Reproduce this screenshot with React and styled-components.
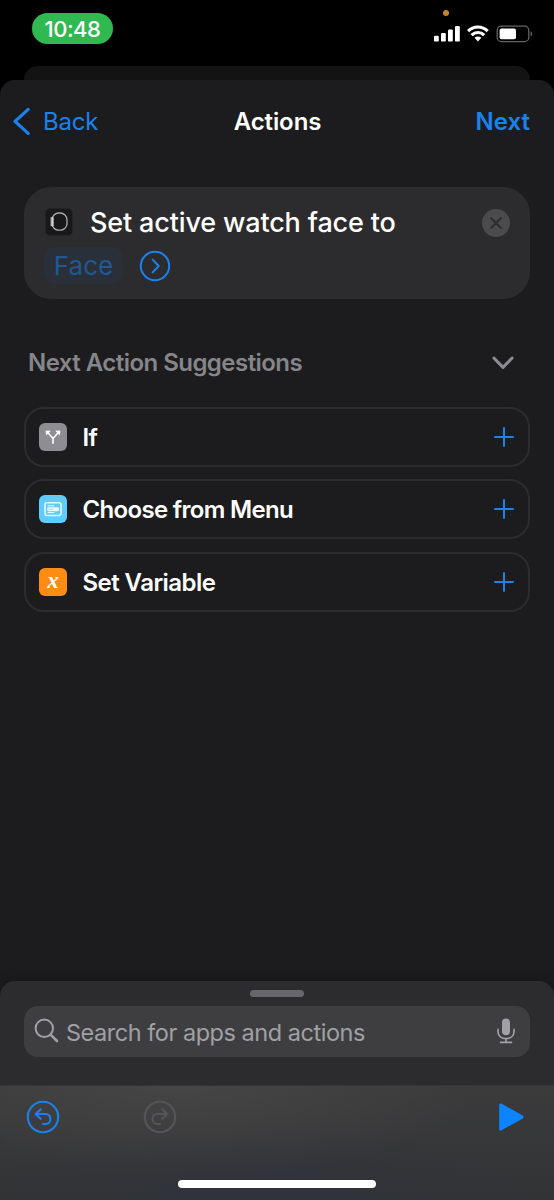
import React from 'react'
import styled, { createGlobalStyle } from 'styled-components'

const blue = '#1a82ee'

const suggestions = [
    { label: 'If', color: '#8e8d93', icon: 'branch', spacing: '-0.6px' },
    { label: 'Choose from Menu', color: '#5fcdfa', icon: 'menu', spacing: '-0.68px' },
    { label: 'Set Variable', color: '#fd8c13', icon: 'variable', spacing: '-0.55px' },
]

const RowGlyph = ({ icon }) => {
    if (icon === 'branch') {
        return (
            <svg width="28" height="28" viewBox="0 0 28 28" fill="none" stroke="#fff" strokeWidth="1.6" strokeLinecap="round">
                <path d="M14 20.3V15.6L9 9.8M14 15.6L19 9.8" />
                <path d="M6.6 7.4L11.8 7.8L7.2 12.4ZM21.4 7.4L16.2 7.8L20.8 12.4Z" fill="#fff" stroke="none" />
            </svg>
        )
    }
    if (icon === 'menu') {
        return (
            <svg width="28" height="28" viewBox="0 0 28 28" fill="none">
                <rect x="6" y="7.8" width="16" height="12.6" rx="1.8" stroke="#e9f9ff" strokeWidth="1.5" />
                <path d="M9 10.8h6M9 17.6h6" stroke="#e9f9ff" strokeWidth="1" strokeLinecap="round" />
                <rect x="8" y="12.2" width="12" height="4" rx="1.4" fill="#e9f9ff" />
                <path d="M9.6 14.2h4.6" stroke="#8bdcfb" strokeWidth="0.9" />
            </svg>
        )
    }
    return <Variable>x</Variable>
}

const App = () => {
    return (
        <Phone>
            <GlobalStyle />
            <StatusBar>
                <Clock>10:48</Clock>
                <StatusIcons>
                    <MicDot />
                    <svg width="99" height="18" viewBox="0 0 99 18" fill="none">
                        <g fill="#fff">
                            <rect x="0" y="10.8" width="4.8" height="5.8" rx="1.2" />
                            <rect x="7" y="8" width="4.8" height="8.6" rx="1.2" />
                            <rect x="14" y="4.4" width="4.8" height="12.2" rx="1.2" />
                            <rect x="21" y="1" width="4.8" height="15.6" rx="1.2" />
                        </g>
                        <g stroke="#fff" strokeWidth="3.1">
                            <path d="M34.1 6.1C39.6 0.6 48.2 0.6 53.7 6.1" />
                            <path d="M37.6 10.1C41.2 6.7 46.6 6.7 50.2 10.1" />
                        </g>
                        <path d="M40.5 12.8C42.4 11.2 45.4 11.2 47.3 12.8L43.9 16.4Z" fill="#fff" />
                        <rect x="63.2" y="1.2" width="31.6" height="15.4" rx="4.2" stroke="#646464" strokeWidth="1.3" />
                        <rect x="65.6" y="3.6" width="16.4" height="10.6" rx="2" fill="#fff" />
                        <path d="M96.6 6.2c2 .8 2 4.6 0 5.4z" fill="#646464" />
                    </svg>
                </StatusIcons>
            </StatusBar>
            <SheetBehind />
            <Sheet>
                <NavBar>
                    <BackButton>
                        <svg width="20" height="30" viewBox="0 0 20 30" fill="none" stroke={blue} strokeWidth="3.2" strokeLinecap="round" strokeLinejoin="round">
                            <path d="M16.2 2.4L3 14.4L16.2 26.4" />
                        </svg>
                        Back
                    </BackButton>
                    <NavTitle>Actions</NavTitle>
                    <NextButton>Next</NextButton>
                </NavBar>

                <ActionCard>
                    <ActionLine>
                        <WatchIcon>
                            <svg width="26" height="26" viewBox="0 0 26 26" fill="none">
                                <path d="M5.5 8.2v9" stroke="#b9b9b9" strokeWidth="1.8" />
                                <rect x="6" y="4" width="15" height="17.2" rx="6.8" stroke="#a8a8a8" strokeWidth="1.3" />
                                <path d="M6.9 8.2v9" stroke="#e4e4e4" strokeWidth="1.4" />
                            </svg>
                        </WatchIcon>
                        <ActionText>Set active watch face to</ActionText>
                        <ClearButton>
                            <svg width="28" height="28" viewBox="0 0 28 28" stroke="#2e2e30" strokeWidth="2.2" strokeLinecap="round">
                                <path d="M9.2 9.2L18.8 18.8M18.8 9.2L9.2 18.8" />
                            </svg>
                        </ClearButton>
                    </ActionLine>
                    <ActionLine>
                        <FaceToken>Face</FaceToken>
                        <svg width="32" height="32" viewBox="0 0 32 32" fill="none" stroke={blue} strokeLinecap="round" strokeLinejoin="round">
                            <circle cx="16" cy="16" r="14.2" strokeWidth="2" />
                            <path d="M13.6 9.6L19.8 16L13.6 22.4" strokeWidth="2" />
                        </svg>
                    </ActionLine>
                </ActionCard>

                <SectionHeader>
                    <h2>Next Action Suggestions</h2>
                    <svg width="22" height="14" viewBox="0 0 22 14" fill="none" stroke="#8c8c91" strokeWidth="3" strokeLinecap="round" strokeLinejoin="round">
                        <path d="M1.9 2L11 11.4L20.1 2" />
                    </svg>
                </SectionHeader>

                <SuggestionList>
                    {suggestions.map((item) => (
                        <SuggestionRow key={item.label}>
                            <RowIcon $color={item.color}>
                                <RowGlyph icon={item.icon} />
                            </RowIcon>
                            <RowLabel $spacing={item.spacing}>{item.label}</RowLabel>
                            <svg width="20" height="20" viewBox="0 0 20 20" stroke={blue} strokeWidth="2" strokeLinecap="round">
                                <path d="M10 1V19M1 10H19" />
                            </svg>
                        </SuggestionRow>
                    ))}
                </SuggestionList>
            </Sheet>

            <Drawer>
                <Handle />
                <SearchField>
                    <svg width="25" height="25" viewBox="0 0 25 25" fill="none" stroke="#a0a0a5" strokeLinecap="round">
                        <circle cx="10.3" cy="10.3" r="8.7" strokeWidth="2" />
                        <path d="M16.8 16.8L23 23" strokeWidth="2.6" />
                    </svg>
                    <SearchText>Search for apps and actions</SearchText>
                    <svg width="18" height="26" viewBox="0 0 18 26" fill="none" stroke="#a0a0a5" strokeLinecap="round">
                        <rect x="5" y="0.6" width="8" height="16.6" rx="4" fill="#a0a0a5" stroke="none" />
                        <path d="M1 11.4v1.8C1 17.8 4.4 20.6 9 20.6S17 17.8 17 13.2v-1.8M9 20.6V24M3.6 24.4H14.4" strokeWidth="1.7" />
                    </svg>
                </SearchField>
            </Drawer>
            <Toolbar>
                <ToolRow>
                    <svg width="34" height="34" viewBox="0 0 34 34" fill="none" stroke={blue} strokeWidth="2.1" strokeLinecap="round" strokeLinejoin="round">
                        <circle cx="17" cy="17" r="15.2" />
                        <path d="M14.6 9.4L9.6 14L14.6 18.7M10 14H19.6C22.6 14 24.4 16.2 24.4 19S22.6 24 19.6 24H17" />
                    </svg>
                    <svg width="34" height="34" viewBox="0 0 34 34" fill="none" stroke="#545557" strokeWidth="2.1" strokeLinecap="round" strokeLinejoin="round">
                        <circle cx="17" cy="17" r="15.2" />
                        <path d="M19.4 9.4L24.4 14L19.4 18.7M24 14H14.4C11.4 14 9.6 16.2 9.6 19S11.4 24 14.4 24H17" />
                    </svg>
                    <PlayButton>
                        <svg width="25" height="28" viewBox="0 0 25 28" fill="#0d84ff">
                            <path d="M0.2 1.8C0.2 0.5 1.5 0.1 2.6 0.7L23.8 12.6C24.9 13.3 24.9 14.7 23.8 15.4L2.6 27.3C1.5 27.9 0.2 27.5 0.2 26.2Z" />
                        </svg>
                    </PlayButton>
                </ToolRow>
                <HomeIndicator />
            </Toolbar>
        </Phone>
    )
}


const GlobalStyle = createGlobalStyle`
    *{
        box-sizing: border-box;
    }
    body{
        margin: 0;
        background: #000;
    }
    svg{
        display: block;
        flex-shrink: 0;
    }
`

const Phone = styled.div`
    width: 554px;
    height: 1200px;
    display: flex;
    flex-direction: column;
    overflow: hidden;
    background: #000;
    color: #fff;
    font-family: Inter, "Liberation Sans", sans-serif;
    font-size: 24px;
    line-height: 30px;
    white-space: nowrap;
`

const StatusBar = styled.header`
    height: 66px;
    display: flex;
    justify-content: space-between;
    align-items: flex-start;
    padding: 13px 21px 0 32px;
`

const Clock = styled.div`
    width: 81px;
    height: 31px;
    border-radius: 16px;
    background: #30b950;
    font-size: 22px;
    font-weight: 500;
    line-height: 32px;
    letter-spacing: -0.5px;
    text-align: center;
`

const StatusIcons = styled.div`
    position: relative;
    padding-top: 12px;
`

const MicDot = styled.span`
    position: absolute;
    top: -3px;
    left: 9px;
    width: 6px;
    height: 6px;
    border-radius: 50%;
    background: #c58329;
`

const SheetBehind = styled.div`
    height: 14px;
    margin: 0 24px;
    border-radius: 14px 14px 0 0;
    background: #131313;
`

const Sheet = styled.main`
    flex: 1;
    border-radius: 15px 15px 0 0;
    background: #1c1c1e;
    padding: 0 24px;
`

const NavBar = styled.nav`
    height: 83px;
    margin: 0 0 24px -12px;
    display: grid;
    grid-template-columns: 1fr auto 1fr;
    align-items: center;
`

const BackButton = styled.div`
    display: flex;
    align-items: center;
    gap: 11px;
    color: ${blue};
    letter-spacing: -0.2px;
`

const NavTitle = styled.h1`
    margin: 0 0 0 13px;
    font-size: 24px;
    font-weight: 600;
    letter-spacing: -0.1px;
`

const NextButton = styled.div`
    justify-self: end;
    color: ${blue};
    font-weight: 600;
    letter-spacing: 0;
`

const ActionCard = styled.section`
    height: 112px;
    border-radius: 27px;
    background: #2c2c2e;
    padding: 14px 20px 0;
`

const ActionLine = styled.div`
    height: 43px;
    display: flex;
    align-items: center;
    & + &{
        gap: 16px;
    }
`

const WatchIcon = styled.div`
    width: 28px;
    height: 28px;
    margin: -1px 0 0 1px;
    border: 1px solid #242426;
    border-radius: 5px;
    background: #18181a;
`

const ActionText = styled.div`
    flex: 1;
    margin-left: 17px;
    font-size: 27px;
    font-weight: 500;
    letter-spacing: -0.15px;
`

const ClearButton = styled.div`
    width: 28px;
    height: 28px;
    border-radius: 50%;
    background: #4b4b4d;
`

const FaceToken = styled.div`
    width: 79px;
    height: 37px;
    border-radius: 10px;
    background: #29303a;
    color: #24578f;
    font-size: 26px;
    line-height: 37px;
    text-align: center;
`

const SectionHeader = styled.div`
    display: flex;
    align-items: center;
    justify-content: space-between;
    height: 30px;
    margin: 49px 16px 29px 4px;
    color: #85858a;
    h2{
        margin: 0;
        font-size: 24px;
        font-weight: 600;
        letter-spacing: -0.54px;
    }
`

const SuggestionList = styled.div`
    display: flex;
    flex-direction: column;
    gap: 12.4px;
`

const SuggestionRow = styled.div`
    height: 60px;
    display: flex;
    align-items: center;
    padding: 0 14px 0 13px;
    border: 2px solid #2c2c2e;
    border-radius: 20px;
`

const RowIcon = styled.div`
    width: 28px;
    height: 28px;
    border-radius: 6px;
    background: ${(props) => props.$color};
`

const Variable = styled.div`
    font-family: "Liberation Serif", serif;
    font-size: 23px;
    font-style: italic;
    font-weight: 700;
    line-height: 25px;
    text-align: center;
`

const RowLabel = styled.div`
    flex: 1;
    padding-top: 2px;
    margin-left: 15.5px;
    font-weight: 600;
    letter-spacing: ${(props) => props.$spacing};
`

const Drawer = styled.section`
    height: 104px;
    margin-top: -15px;
    padding: 9px 24px 0;
    border-radius: 15px 15px 0 0;
    background: #2c2c2e;
    box-shadow: 0 -2px 12px rgba(0, 0, 0, 0.22);
`

const Handle = styled.div`
    width: 54px;
    height: 7px;
    margin: 0 auto 9px;
    border-radius: 4px;
    background: #67666c;
`

const SearchField = styled.div`
    height: 51px;
    display: flex;
    align-items: center;
    padding: 0 15px 2px 10px;
    border-radius: 14px;
    background: #3e3e40;
`

const SearchText = styled.div`
    flex: 1;
    padding-top: 4px;
    margin-left: 7px;
    color: #a0a0a5;
    font-size: 23.5px;
    letter-spacing: -0.47px;
`

const Toolbar = styled.footer`
    height: 115px;
    display: flex;
    flex-direction: column;
    align-items: center;
    justify-content: space-between;
    padding: 14px 30px 12px;
    border-top: 1px solid #363638;
    background:
        radial-gradient(ellipse 300px 90px at 32% 0, rgba(80, 78, 78, 0.55), transparent),
        radial-gradient(ellipse 260px 70px at 48% 100%, rgba(46, 51, 60, 0.9), transparent),
        linear-gradient(#3b3b3c, #323335);
`

const ToolRow = styled.div`
    align-self: stretch;
    margin-left: -4px;
    display: flex;
    align-items: center;
    gap: 83px;
`

const PlayButton = styled.div`
    margin-left: auto;
`

const HomeIndicator = styled.div`
    width: 198px;
    height: 8px;
    border-radius: 4px;
    background: #fff;
`


export default App
